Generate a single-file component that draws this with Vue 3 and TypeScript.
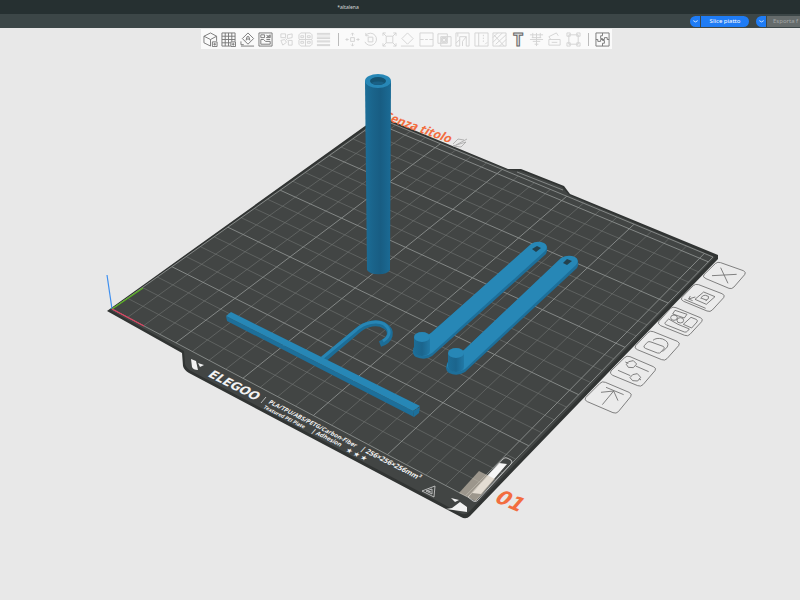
<script setup lang="ts">
interface Tool {
  name: string
  d: string
  on?: boolean
  glyph?: string
}
type Pt = [number, number]

const viewTools: Tool[] = [
  { name: 'Aggiungi', on: true, d: 'M1 4.500 8 1l6.500 3.500v5M8 15l-7-3.500v-7L8 8l6.500-3.500M8 8v7M10 10.500h5v5h-5zM11 13h3M12.500 11.500v3' },
  { name: 'Aggiungi piatto', on: true, d: 'M1 1h14v9M1 1v14h9M1 4.500h14M1 8h14M1 11.500h9M4.500 1v14M8 1v14M11.500 1v9M10.500 10.500h5v5h-5zM11.500 13h3M13 11.500v3' },
  { name: 'Orienta', on: true, d: 'M8.500 1l6 6-6 6-6-6zM6.500 9l1-4h2l1 4M7 7.500h3M1 15h14M1 10v3.500h3' },
  { name: 'Disponi', on: true, d: 'M1 1h14v14H1zM3 3h4v3H3zM9 3.500l4 2M9 6l4-3v3zM3 8h3l2 2h5v3H3zM13 8H9' },
]
const objectTools: Tool[] = [
  { name: 'Dividi in oggetti', d: 'M2 2h5v4H2zM9 3l5-1v4l-5 1zM2 9l4-1 2 3-4 3zM10 9h4v5h-4zM7 7l2 2' },
  { name: 'Dividi in parti', d: 'M3 1h10l2 2v4l-1 1 1 1v4l-2 2H3l-2-2V9l1-1-1-1V3zM8 1v14M1 8h14M3 4h3v2H3zM10 4h3v2h-3zM3 10h3v2H3zM10 10h3v2h-3z' },
  { name: 'Altezza strato', d: 'M1 1.500h14M1 3h14M1 5.500h14M1 7h14M1 9.500h14M1 10.500h14M1 13.500h14M1 14.500h14' },
]
const editTools: Tool[] = [
  { name: 'Sposta', d: 'M6 6h4v4H6zM8 1v3M8 12v3M1 8h3M12 8h3M6.500 2.500 8 1l1.500 1.500M6.500 13.500 8 15l1.500-1.500M2.500 6.500 1 8l1.500 1.500M13.500 6.500 15 8l-1.500 1.500' },
  { name: 'Ruota', d: 'M5.500 5.500h5v5h-5zM3 3.500a6.500 6.500 0 1 1-1 7M3 1v3h3' },
  { name: 'Scala', d: 'M4.500 4.500h7v7h-7zM1 1l3.500 3.500M15 1l-3.500 3.500M1 15l3.500-3.500M15 15l-3.500-3.500M1 4V1h3M12 1h3v3M1 12v3h3M12 15h3v-3' },
  { name: 'Posa su faccia', d: 'M8 1l6 6-6 6-6-6zM1 15h14' },
  { name: 'Taglia', d: 'M1 1h14v14H1zM1 8h4M6.500 8h3M11 8h4' },
  { name: 'Booleano', d: 'M1 2h10v10H1zM4 5h11v10H4zM5 6h5v5H5zM6 7h3v3H6z' },
  { name: 'Supporti', d: 'M1 1h14v14h-3V5H5v10H1zM5 8l-4 4M12 5l-4 5v5M3 1v4' },
  { name: 'Cucitura', d: 'M1 1h14v14H1zM5 1v14M10 3v1.500M10 6v1.500M10 9v1.500M12 13l2-2' },
  { name: 'Colore', d: 'M1 1h14v14H1zM1 6l5-5M1 11 11 1M4 13 15 3M8 15l7-7M2 3l11 12' },
  { name: 'Testo', on: true, glyph: 'T', d: '' },
  { name: 'Emboss', d: 'M1 3h14M3 6h10M1 8h14M4 10h8M8 1v14M4 1v5M12 1v5M6 13h4' },
  { name: 'Assembla', d: 'M2 8h12v6H2zM4 8l-2-3 8-4 2 3M5 11h6' },
  { name: 'Semplifica', d: 'M3 3h10v10H3zM1 1h3.500v3.500H1zM11.500 1H15v3.500h-3.500zM1 11.500h3.500V15H1zM11.500 11.500H15V15h-3.500z' },
]
const endTools: Tool[] = [
  { name: 'Vista assieme', on: true, d: 'M1 1h14v14H1zM8 1v3H6v3h2v2h2v3H8v3M1 8h2v2h3V8h4V6h3v2h2' },
]
const groups: { id: string; tools: Tool[]; bar?: boolean }[] = [
  { id: 'view', tools: viewTools },
  { id: 'object', tools: objectTools },
  { id: 'edit', tools: editTools, bar: true },
  { id: 'end', tools: endTools, bar: true },
]

// Screen corners of the 256 mm bed: origin, +x, +x+y, +y
const bed: Pt[] = [[112, 309], [475, 501], [713, 257], [381, 119]]
const SIZE = 256
const STEP = 12.5

function project(mx: number, my: number): Pt {
  const [a, b, c, d] = bed
  const u = mx / SIZE
  const v = my / SIZE
  const dx1 = b[0] - c[0], dx2 = d[0] - c[0], sx = a[0] - b[0] + c[0] - d[0]
  const dy1 = b[1] - c[1], dy2 = d[1] - c[1], sy = a[1] - b[1] + c[1] - d[1]
  const det = dx1 * dy2 - dx2 * dy1
  const g = (sx * dy2 - dx2 * sy) / det
  const h = (dx1 * sy - sx * dy1) / det
  const w = g * u + h * v + 1
  return [
    ((b[0] - a[0] + g * b[0]) * u + (d[0] - a[0] + h * d[0]) * v + a[0]) / w,
    ((b[1] - a[1] + g * b[1]) * u + (d[1] - a[1] + h * d[1]) * v + a[1]) / w,
  ]
}
function segment(x1: number, y1: number, x2: number, y2: number): string {
  const p = project(x1, y1)
  const q = project(x2, y2)
  return `M${p[0].toFixed(1)} ${p[1].toFixed(1)}L${q[0].toFixed(1)} ${q[1].toFixed(1)}`
}
let minor = ''
let major = ''
for (let i = 0; i <= 20; i++) {
  const t = i * STEP
  const s = segment(t, 0, t, SIZE) + segment(0, t, SIZE, t)
  if (i % 4 === 0) major += s
  else minor += s
}
major += segment(SIZE, 0, SIZE, SIZE) + segment(0, SIZE, SIZE, SIZE)

const plateActions = [
  { name: 'Elimina piatto', box: 'M437 70Q443 65 452 68L520 92Q530 97 524 104L492 141Q486 148 477 145L408 116Q396 111 402 104Z', d: 'M452 83 474 130M426 107 500 103' },
  { name: 'Orienta piatto', box: 'M370 137Q376 131 386 134L456 161Q467 166 461 173L427 210Q421 217 411 213L341 184Q330 179 336 172Z', d: 'M401 156 435 170 409 193 375 178ZM393 177Q395 165 407 166 420 168 415 176L407 182M395 175 411 181M343 178 407 205M376 171 356 177 361 168M356 177 368 182' },
  { name: 'Disponi piatto', box: 'M302 205Q308 199 318 203L391 233Q401 238 395 245L360 283Q354 290 344 286L272 257Q261 251 267 244Z', d: 'M315 211 351 223 343 234 308 222ZM296 237 286 247Q282 251 288 254L343 276Q349 278 353 273L358 267 324 253ZM363 232 378 238Q385 241 381 246L365 264 340 253ZM302 233A10 8 0 1 0 322 233A10 8 0 1 0 302 233M321 241A10 8 0 1 0 341 241A10 8 0 1 0 321 241' },
  { name: 'Blocca piatto', box: 'M234 278Q240 271 250 275L322 304Q332 309 326 317L291 356Q285 363 275 359L202 329Q191 324 197 317Z', d: 'M232 307 223 317Q219 322 226 325L262 339Q270 341 273 336L282 326Q285 322 279 319L243 306Q236 303 232 307M249 301Q259 292 278 297 299 305 292 321L278 335' },
  { name: 'Impostazioni piatto', box: 'M164 353Q170 346 180 350L250 380Q261 385 255 392L219 434Q213 441 203 437L128 406Q117 400 123 393Z', d: 'M166 366 175 370M197 378 236 395M176 365 190 362 200 372 190 383 175 382 169 373ZM144 391 181 407M207 416 213 420M188 404 202 401 212 412 203 423 188 422 180 413Z' },
  { name: 'Sposta in primo piano', box: 'M90 430Q96 423 106 427L177 457Q188 462 182 470L145 515Q139 522 129 518L52 485Q41 480 47 473Z', d: 'M108 442 161 464M131 453 97 494M93 457 131 453 144 482' },
]

const arms = [
  {
    side: 'M431 333 531 245Q538 240 545 244 549 247 546 254L432 356Q425 361 416 357 410 353 415 345Z',
    top: 'M431 333 531 244Q537 240 544 243 549 246 545 251L432 353Q425 358 417 354 411 350 416 343Z',
    hole: 'M532 249 537 246 541 248 536 252Z',
    cx: 422, cy: 337,
  },
  {
    side: 'M464 350 561 259Q568 254 576 258 580 262 577 268L465 372Q457 377 449 373 443 369 449 360Z',
    top: 'M464 350 561 258Q568 254 575 257 580 260 576 265L465 369Q457 374 450 370 444 366 450 359Z',
    hole: 'M563 263 567 259 572 261 567 265Z',
    cx: 456, cy: 353,
  },
]
</script>

<template>
  <div class="app">
    <header class="titlebar"><h1>*altalena</h1></header>
    <nav class="actions">
      <div class="split">
        <button class="drop" aria-label="Opzioni slice"><svg viewBox="0 0 8 8"><path d="M1.500 3Q4 6 6.500 3" /></svg></button>
        <button class="main">Slice piatto</button>
      </div>
      <div class="split export">
        <button class="drop" aria-label="Opzioni esportazione"><svg viewBox="0 0 8 8"><path d="M1.500 3Q4 6 6.500 3" /></svg></button>
        <button class="main" disabled>Esporta f</button>
      </div>
    </nav>
    <main class="viewport">
      <div class="toolbar" role="toolbar">
        <template v-for="g in groups" :key="g.id">
          <span v-if="g.bar" class="rule"></span>
          <div class="group" :class="g.id">
            <button v-for="t in g.tools" :key="t.name" :aria-label="t.name" :class="{ on: t.on }" :disabled="!t.on">
              <span v-if="t.glyph" class="glyph">{{ t.glyph }}</span>
              <svg v-else viewBox="0 0 16 16"><path :d="t.d" /></svg>
            </button>
          </div>
        </template>
      </div>
      <svg class="scene" viewBox="0 28 800 572" preserveAspectRatio="xMidYMid slice">
        <defs>
          <linearGradient id="tube"><stop offset="0" stop-color="#1c6e98" /><stop offset=".3" stop-color="#1a648b" /><stop offset=".6" stop-color="#185d83" /><stop offset="1" stop-color="#1b6b95" /></linearGradient>
          <linearGradient id="peg"><stop offset="0" stop-color="#1c6d97" /><stop offset=".5" stop-color="#1b658d" /><stop offset="1" stop-color="#2179a6" /></linearGradient>
        </defs>

        <!-- build plate -->
        <path class="plate-edge" d="M107 311 379 116 392 121 508 169 521 169 564 186 570 194 718 255 718 259 470 516Q466 520 461 517L189 373Q184 370 183 366L182 353Z" />
        <path class="plate" d="M110 310 380 118 508 170 521 171 562 187 569 195 715 257 469 512Q465 516 460 513L191 371Q186 368 185 364L184 351Z" />
        <path class="minor" :d="minor" />
        <path class="major" :d="major" />
        <path class="major" d="M517 172 563 190" />
        <path class="axis blue" d="M112 309 107 275" />
        <path class="axis green" d="M112 309 143 288" />
        <path class="axis red" d="M112 309 144 326" />

        <!-- plate markings -->
        <g class="mark">
          <path d="M191 359 196 361 198 370Q193 370 192 367ZM198 363 204 365 200 367Z" />
          <path d="M446 509 452 508 460 502 467 507V512ZM451 498 459 500 455 502Z" />
          <text class="brand" transform="translate(207 376) rotate(27) skewX(-20)">ELEGOO</text>
          <path class="thin" d="M261 403 266 397" />
          <g class="fine">
            <text class="s6" transform="translate(268 403) rotate(27) skewX(-15)">PLA/TPU/ABS/PETG/Carbon-Fiber</text>
            <text class="s7" transform="translate(360 450) rotate(27) skewX(-15)">| 256×256×256mm³</text>
            <text class="s5" transform="translate(263 408) rotate(27) skewX(-15)">Textured PEI Plate</text>
            <text class="s6" transform="translate(311 432) rotate(27) skewX(-15)">| Adhesion</text>
            <text class="s7" transform="translate(345 451) rotate(27) skewX(-15)">★ ★ ★</text>
          </g>
          <path class="thin" d="M422 491 435 486 434 497ZM426 491 432 489 432 494ZM428 491 431 492" />
        </g>
        <path class="white" d="M499 463 507 464 481 494 472 493Z" />
        <path class="frame" d="M468 497 503 459Q505 457 507 458L511 460Q513 462 511 464L477 501Q475 502 473 501Z" />
        <path class="prime" d="M459 493 479 471 495 479 476 501Z" />

        <!-- plate name and number -->
        <text class="orange name" transform="translate(383 119) rotate(20) skewX(-15)">Senza titolo</text>
        <path class="pencil" d="M453 144 458 139 464 140M466 142 461 147 453 146ZM456 145 467 139" />
        <text class="orange number" transform="translate(493 501) rotate(23) skewX(-18)">01</text>

        <!-- plate actions -->
        <g class="plate-actions" transform="translate(570 240) scale(.3333)">
          <g v-for="a in plateActions" :key="a.name" role="button" :aria-label="a.name">
            <path class="box" :d="a.box" />
            <path :d="a.d" />
          </g>
        </g>

        <!-- tube -->
        <path fill="url(#tube)" d="M365 81 367 270A12 6 0 0 0 390 270L391 81Z" />
        <ellipse class="face" cx="378" cy="81" rx="13" ry="7" />
        <ellipse class="bore" cx="378" cy="81" rx="8" ry="4" />
        <path class="lip" d="M371 83A8 4 0 0 0 385 83A9 4 0 0 0 371 83" />

        <!-- hook and bar -->
        <path class="hook-dark" d="M323 360 357 331C366 323 378 321 385 326 393 331 391 340 380 344" />
        <path class="hook-light" d="M322 358 356 330C365 322 377 320 384 324 391 329 391 336 383 341" />
        <path class="side" d="M226 316 413 411 414 417 227 321Z" />
        <path class="face" d="M226 316 231 312 420 406 413 411Z" />
        <path class="dark" d="M413 411 420 407 419 413 414 417Z" />

        <!-- arms -->
        <g v-for="arm in arms" :key="arm.cx">
          <path class="side" :d="arm.side" />
          <path class="face" :d="arm.top" />
          <path class="hole" :d="arm.hole" />
          <path fill="url(#peg)" :d="`M${arm.cx - 8} ${arm.cy}v14a8 5 0 0 0 16 0v-14z`" />
          <ellipse class="face" :cx="arm.cx" :cy="arm.cy" rx="8" ry="5" />
        </g>
      </svg>
    </main>
  </div>
</template>

<style>
body { margin: 0; overflow: hidden; }
</style>

<style scoped>
.app { display: flex; flex-direction: column; height: 100vh; background: #e8e8e8; font-family: "Noto Sans", sans-serif; }
button { border: 0; margin: 0; padding: 0; font: inherit; background: none; }
.titlebar { height: 14px; flex: none; box-sizing: border-box; padding-right: 104px; background: #263031; color: #d9dcdc; text-align: center; }
.titlebar h1 { margin: 0; font-size: 5px; line-height: 14px; font-weight: 400; }
.actions { height: 14px; flex: none; display: flex; justify-content: flex-end; align-items: flex-end; gap: 7px; background: #3c4647; overflow: hidden; padding-bottom: 1px; box-sizing: border-box; }
.split { display: flex; gap: 1px; height: 11px; width: 59px; border-radius: 6px; overflow: hidden; font-size: 6px; line-height: 11px; white-space: nowrap; }
.split .drop { width: 10px; flex: none; background: #1f7cf5; display: flex; align-items: center; justify-content: center; }
.drop svg { width: 7px; height: 7px; fill: none; stroke: #e2efff; stroke-width: 1; }
.split .main { flex: 1; background: #1f7cf5; color: #fff; }
.split.export { width: 44px; border-radius: 6px 0 0 6px; }
.export .main { background: #656b6b; color: #a3a7a7; text-align: left; padding-left: 6px; }
.viewport { position: relative; flex: 1; min-height: 0; }
.scene { display: block; width: 100%; height: 100%; background: #e8e8e8; }
.toolbar { position: absolute; top: 1px; left: 201px; box-sizing: border-box; height: 20px; padding: 0 2px; display: flex; align-items: center; background: #fafafa; }
.group { display: flex; justify-content: space-between; }
.group button { width: 15px; height: 15px; }
.group svg { display: block; width: 15px; height: 15px; fill: none; stroke: #d3d3d3; stroke-width: 1; }
.group .on svg { stroke: #777; }
.view { width: 70px; margin-right: 6px; }
.object { width: 52px; }
.edit { width: 236px; }
.rule { width: 1px; height: 13px; margin: 0 6px 0 7px; background: #bbb; }
.glyph { display: block; font-size: 17px; line-height: 15px; font-weight: 700; color: #ddd; -webkit-text-stroke: 1px #666; }

.plate-edge { fill: #313433; }
.plate { fill: #424544; }
.minor, .major, .axis { fill: none; }
.minor { stroke: #727574; stroke-width: .6; }
.major { stroke: #8b8e8d; stroke-width: .9; }
.axis { stroke-width: 1.2; }
.blue { stroke: #3d8ff0; }
.green { stroke: #5bb521; }
.red { stroke: #e0405f; }
.mark { fill: #f2f2f2; }
.thin { fill: none; stroke: #d5d5d5; stroke-width: .8; }
.brand { font: 700 12px "DejaVu Sans", sans-serif; }
.fine { font-family: "Open Sans", "DejaVu Sans", sans-serif; font-weight: 700; }
.s5 { font-size: 5px; }
.s6 { font-size: 6px; }
.s7 { font-size: 7px; }
.white { fill: #f6f6f6; }
.prime { fill: #d8cdbd; fill-opacity: .6; }
.frame { fill: none; stroke: #c8c8c8; stroke-width: .9; }
.orange { fill: #f26d3f; }
.name { font: 700 12px "Open Sans", sans-serif; }
.number { font: 700 20px "DejaVu Sans", sans-serif; }
.pencil { fill: none; stroke: #a5a5a5; stroke-width: .8; }
.plate-actions { fill: none; stroke: #6e6e6e; stroke-width: 2.600; stroke-linejoin: round; }
.plate-actions .box { fill: #ebebeb; }
.face { fill: #2787b6; }
.side { fill: #1d6f9a; }
.dark { fill: #1c709c; }
.bore { fill: #155371; }
.lip { fill: #1a6186; }
.hole { fill: #23414e; }
.hook-dark { fill: none; stroke: #1c6d97; stroke-width: 6; }
.hook-light { fill: none; stroke: #2785b4; stroke-width: 3; }
</style>
